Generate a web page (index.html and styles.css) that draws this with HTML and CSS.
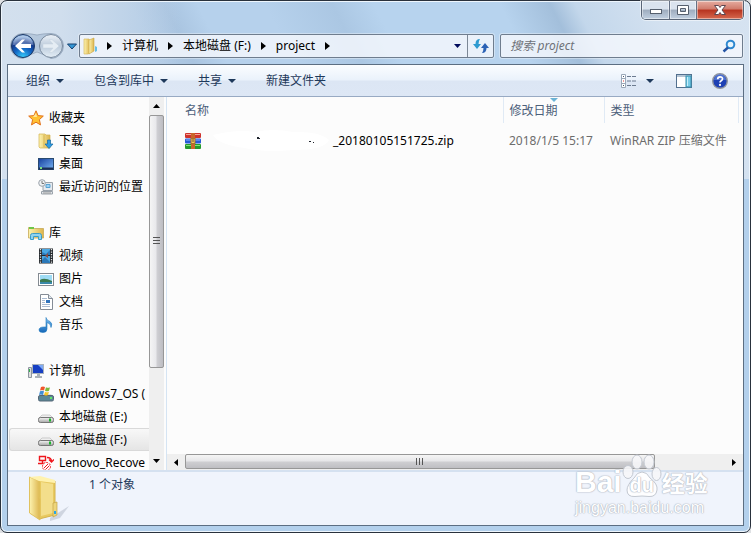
FILE: index.html
```html
<!DOCTYPE html>
<html lang="zh-CN">
<head>
<meta charset="utf-8">
<title>project</title>
<link rel="stylesheet" href="styles.css">
</head>
<body>
<svg class="defs" width="0" height="0" aria-hidden="true">
  <defs>
    <linearGradient id="gold" x1="0" x2="1"><stop offset="0" stop-color="#fdf3b0"/><stop offset="1" stop-color="#dcb44c"/></linearGradient>
    <linearGradient id="blue" x1="0" y1="0" x2="0" y2="1"><stop offset="0" stop-color="#7cc0f5"/><stop offset="1" stop-color="#1567b8"/></linearGradient>
    <linearGradient id="screen" x1="0" y1="0" x2="1" y2="1"><stop offset="0" stop-color="#163f9c"/><stop offset="1" stop-color="#78b5f5"/></linearGradient>
    <linearGradient id="metal" x1="0" y1="0" x2="0" y2="1"><stop offset="0" stop-color="#f6f6f6"/><stop offset="1" stop-color="#a5a5a5"/></linearGradient>
    <radialGradient id="orb" cx=".5" cy="1" r=".9"><stop offset="0" stop-color="#39d3ff"/><stop offset=".45" stop-color="#1266c4"/><stop offset=".75" stop-color="#15398c"/><stop offset="1" stop-color="#8fb3e0"/></radialGradient>
    <linearGradient id="orb2" x1="0" y1="0" x2="0" y2="1"><stop offset="0" stop-color="#edf2f8"/><stop offset=".5" stop-color="#bccbdb"/><stop offset="1" stop-color="#e4eef7"/></linearGradient>
    <symbol id="i-drive" viewBox="0 0 16 16"><path d="M1 9 4 6h8l3 3z" fill="#eee" stroke="#bbb" stroke-width=".7"/><rect x=".5" y="8.5" width="15" height="5" rx="1.8" fill="url(#metal)" stroke="#777"/><path d="M12 9.5v3" stroke="#19b62a" stroke-width="2"/></symbol>
  </defs>
</svg>
<div class="window">
  <header class="titlebar">
    <div class="controls">
      <button class="ctl min" aria-label="最小化"><svg width="14" height="12"><rect x="1.500" y="5.500" width="11" height="4" fill="#fff" stroke="#56606e"/></svg></button>
      <button class="ctl max" aria-label="最大化"><svg width="14" height="12"><path d="M1.500 1.500h11v9h-11zM4.500 4.500v3h5v-3z" fill="#fff" fill-rule="evenodd" stroke="#56606e"/></svg></button>
      <button class="ctl close" aria-label="关闭"><svg width="14" height="12"><path d="M1.500 1.500h4L7 3.500l1.500-2h4L9 6l3.500 4.500h-4L7 8.500l-1.500 2h-4L5 6z" fill="#fff" stroke="#5c4650"/></svg></button>
    </div>
  </header>
  <nav class="navbar" aria-label="导航">
    <div class="travel">
      <svg class="travel-back" width="56" height="28" aria-hidden="true"><path d="M14 1.500Q22 1.500 28 3Q34 1.500 42 1.500A12.500 12.500 0 1 1 42 26.500Q34 22 28 20Q22 22 14 26.500A12.500 12.500 0 1 1 14 1.500z" fill="#9fb5cd" fill-opacity=".55" stroke="#8193aa" stroke-opacity=".6"/></svg>
      <button aria-label="后退"><svg width="26" height="26"><circle cx="13" cy="13" r="11.500" fill="url(#orb)" stroke="#1c3865"/><path d="M3 12a10 9.500 0 0 1 20 0z" fill="#fff" opacity=".28"/><path d="M5 13l7-6.500h3l-4 4.500h10v4H11l4 4.500h-3z" fill="#fff"/></svg></button>
      <button aria-label="前进"><svg width="26" height="26"><circle cx="13" cy="13" r="11.500" fill="url(#orb2)" stroke="#78899d"/><path d="M21 13l-7-6.500h-3l4 4.500H5v4h10l-4 4.500h3z" fill="#e5edf4" stroke="#c5d3df" stroke-width=".5"/></svg></button>
    </div>
    <button class="history" aria-label="最近的页面"><svg width="10" height="7"><path d="M.500 1h9L5 6z" fill="#3598d6" stroke="#17406f"/></svg></button>
    <div class="address">
      <svg class="addr-icon" width="16" height="18"><path d="M1 2h5l1 2v12l-2 1H1z" fill="url(#gold)" stroke="#d5b453" stroke-width=".6"/><path d="M6 3l5-2v13l-5 3z" fill="url(#gold)" stroke="#c7a644" stroke-width=".6"/><path d="M12 9l2 1v4l-2 1z" fill="#65bde8"/></svg>
      <svg class="sep" width="5" height="8"><path d="M0 0l5 4-5 4z"/></svg>
      <button>计算机</button>
      <svg class="sep" width="5" height="8"><path d="M0 0l5 4-5 4z"/></svg>
      <button>本地磁盘 (F:)</button>
      <svg class="sep" width="5" height="8"><path d="M0 0l5 4-5 4z"/></svg>
      <button>project</button>
      <svg class="sep" width="5" height="8"><path d="M0 0l5 4-5 4z"/></svg>
      <button class="addr-drop" aria-label="以前的位置"><svg width="7" height="4"><path d="M0 0h7L3.500 4z" fill="#000b5c"/></svg></button>
      <button class="refresh" aria-label="刷新"><svg width="16" height="14"><path d="M7 0Q2.500 0 2.500 5H0l4 5 4-5H5.500Q5.500 2 7 0z" fill="#2d9ad0"/><path d="M9 14q4.500 0 4.500-5H16l-4-5-4 5h2.500q0 3-1.500 5z" fill="#2b62b5"/></svg></button>
    </div>
    <label class="search">
      <input type="text" placeholder="搜索 project" aria-label="搜索 project">
      <svg width="14" height="14"><circle cx="8.500" cy="5.500" r="3.800" fill="#e8f5fd" stroke="#2e88d0" stroke-width="2"/><path d="M6 8.500L1.500 12.500" stroke="#2454a4" stroke-width="2.500"/></svg>
    </label>
  </nav>

  <div class="client">
    <div class="toolbar">
      <button>组织<svg width="8" height="4"><path d="M0 0h8L4 4z"/></svg></button>
      <button>包含到库中<svg width="8" height="4"><path d="M0 0h8L4 4z"/></svg></button>
      <button>共享<svg width="8" height="4"><path d="M0 0h8L4 4z"/></svg></button>
      <button>新建文件夹</button>
      <span class="tools">
        <button aria-label="更改视图"><svg width="16" height="14"><path d="M.500 .500h4v13h-4zM.500 4.500h4M.500 9.500h4" fill="#fff" stroke="#9aa8b8"/><path d="M2 2.500h1M2 11.500h1" stroke="#475a70"/><path d="M2 7h1" stroke="#d33"/><path d="M6 2.500h4m1 0h4M6 7h4m1 0h4M6 11.500h4m1 0h4" stroke="#6c7b90"/></svg></button>
        <button aria-label="更多选项"><svg width="8" height="4"><path d="M0 0h8L4 4z"/></svg></button>
        <button aria-label="显示预览窗格"><svg width="16" height="14"><rect x=".500" y=".500" width="15" height="13" fill="#fff" stroke="#52708f"/><path d="M1 2h14" stroke="#6d8cab"/><rect x="10" y="2" width="5" height="11" fill="#79cce7" stroke="#398fae"/><path d="M11.500 3v9" stroke="#c6effb"/></svg></button>
        <button aria-label="获取帮助"><svg width="16" height="16"><circle cx="8" cy="8" r="7.300" fill="#1d40b4" stroke="#8f949d" stroke-width="1.400"/><path d="M2 7a6 6 0 0 1 12 0z" fill="#7aa0ec" opacity=".5"/><path d="M5.700 6.200q0-2.400 2.400-2.400t2.400 2q0 1.200-1.300 1.900T8 9.500" fill="none" stroke="#fff" stroke-width="1.700"/><circle cx="8" cy="11.900" r="1.100" fill="#fff"/></svg></button>
      </span>
    </div>

    <div class="body">
      <aside class="tree">
        <ul>
          <li class="root"><a href="#"><svg viewBox="0 0 16 16"><path d="M8 .800l2.100 4.800 5.200.500-3.900 3.500 1.100 5.300L8 12.200l-4.500 2.700 1.100-5.300L.700 6.100l5.200-.5z" fill="#ffc132" stroke="#e2711c"/><path d="M8 3l1 4H5z" fill="#ffe79a"/></svg>收藏夹</a></li>
          <li><a href="#"><svg viewBox="0 0 16 16"><path d="M1 1h6l1 1h4v13H2l-1-1z" fill="url(#gold)" stroke="#d2b14f" stroke-width=".7"/><path d="M6 2v12" stroke="#d6b64f"/><path d="M9.500 7h3v4h2.500l-4 4.500L7 11h2.500z" fill="#2f9be4" stroke="#16679f" stroke-width=".7"/></svg>下载</a></li>
          <li><a href="#"><svg viewBox="0 0 16 16"><rect x=".500" y="2.500" width="15" height="11" fill="url(#screen)" stroke="#294a70"/><path d="M1 12.500h14" stroke="#1b2e55" stroke-width="2"/><path d="M2 12h2" stroke="#7be081" stroke-width="2"/></svg>桌面</a></li>
          <li><a href="#"><svg viewBox="0 0 16 16"><path d="M5 3.500h9.500v8H5zM3.500 12.500h11v2.500h-11z" fill="#e5e9ee" stroke="#9aa2aa"/><path d="M8 5.500h4v3H8z" fill="#9fd2f5" stroke="#58a3d2"/><path d="M5 14h8" stroke="#999"/><circle cx="4" cy="4" r="3.300" fill="#eef2f5" stroke="#9ba3aa"/><path d="M4 2v2.500h2" fill="none" stroke="#777"/></svg>最近访问的位置</a></li>
        </ul>
        <ul>
          <li class="root"><a href="#"><svg viewBox="0 0 16 16"><path d="M.500 13V2.500h5l1 1h9V13z" fill="url(#gold)" stroke="#c7a957" stroke-width=".8"/><path d="M1 3h5" stroke="#6fc648" stroke-width="2"/><path d="M2.500 14.500v-4q0-2 2-2h7q2 0 2 2v4h-3v-3h-5v3z" fill="#8ed3f0" stroke="#3b9cc8"/></svg>库</a></li>
          <li><a href="#"><svg viewBox="0 0 16 16"><rect x="1" y=".500" width="14" height="15" fill="#252a2e"/><path d="M4 1h8v6H4zM4 8h8v7H4z" fill="#4aa8e4"/><path d="M4 4l4 2 4-4v5H4zM4 12l3-3 5 5v1H4z" fill="#2b78b8"/><path d="M7 8l3-3v5z" fill="#8b4b42"/><path d="M2.500 1v14M13.500 1v14" stroke="#e5e5e5" stroke-width="1.300" stroke-dasharray="1.300 1.200"/></svg>视频</a></li>
          <li><a href="#"><svg viewBox="0 0 16 16"><rect x=".500" y="2.500" width="15" height="12" fill="#fff" stroke="#848a91"/><rect x="2" y="4" width="12" height="9" fill="#9fdcf5"/><path d="M2 9q4-3 12 1v3H2z" fill="#3c7951"/><path d="M2 11h12v2H2z" fill="#3988a8"/></svg>图片</a></li>
          <li><a href="#"><svg viewBox="0 0 16 16"><path d="M2.500 .500h8l4 4v11h-12z" fill="#fff" stroke="#858c96"/><path d="M10.500 .500v4h4" fill="#dfe7ef" stroke="#858c96"/><path d="M4 4.500h5M4 6.500h3M4 8.500h3M4 10.500h8M4 12.500h8" stroke="#a9bbd2"/><rect x="8" y="6" width="4" height="3" fill="#2f73bd"/></svg>文档</a></li>
          <li><a href="#"><svg viewBox="0 0 16 16"><path d="M8 .500q.500 3 4 4 3 2 1 6 0-4-4-5v6.500q0 3.500-4 3.500-4 0-4-2.500 0-3 5-3h2z" fill="url(#blue)" stroke="#1f78bd" stroke-width=".6"/></svg>音乐</a></li>
        </ul>
        <ul>
          <li class="root"><a href="#"><svg viewBox="0 0 16 16"><path d="M.500 4.500h3v10h-3z" fill="#ddd" stroke="#8d969f"/><path d="M1.500 6v3" stroke="#32b14a"/><rect x="4.500" y="1.500" width="11" height="9" fill="#173fc3" stroke="#a9b2bc"/><path d="M10 2h5v5z" fill="#7faaf5"/><path d="M9 11h3v2h2v2H7v-2h2z" fill="#aab1b8"/></svg>计算机</a></li>
          <li><a href="#"><svg viewBox="0 0 16 16"><path d="M1 10l2-2h10l2 2z" fill="#dce2e5"/><rect x=".500" y="9.500" width="15" height="5.500" rx="1.500" fill="#5b8796" stroke="#567"/><path d="M12 12h2" stroke="#61e768" stroke-width="2"/><path d="M3 1q2-1 4 0L6 4.500q-2-1-4 0z" fill="#f1562b"/><path d="M8 1.300q2 1 4 0l-1 3.500q-2 1-4 0z" fill="#7bb93c"/><path d="M2 5.300q2-1 4 0L5 9q-2-1-4 0z" fill="#418ed5"/><path d="M7 5.700q2 1 4 0L10 9q-2 1-4 0z" fill="#f9c62a"/></svg>Windows7_OS (</a></li>
          <li><a href="#"><svg><use href="#i-drive"/></svg>本地磁盘 (E:)</a></li>
          <li class="selected"><a href="#" aria-current="page"><svg><use href="#i-drive"/></svg>本地磁盘 (F:)</a></li>
          <li><a href="#"><svg viewBox="0 0 16 16"><path d="M1.500 1.500h6v4h-6zM0 8.500h9M9 2.500q4.500 0 4.500 4M11 4.500l2.500 2.500L16 4.500M4.500 6v2" fill="none" stroke="#ef161c" stroke-width="1.400"/><circle cx="8.500" cy="11.500" r="4" fill="#fff" stroke="#ef161c" stroke-dasharray="2 1"/><path d="M6 13l4-4M7.500 14.500l4-4" stroke="#ef161c"/></svg>Lenovo_Recove</a></li>
        </ul>
      </aside>
      <div class="vscroll" aria-hidden="true">
        <span class="arrow"><svg width="7" height="4"><path d="M0 4h7L3.500 0z"/></svg></span>
        <div class="track"><div class="thumb"><svg width="7" height="8"><path d="M0 .500h7M0 3.500h7M0 6.500h7" stroke="#555"/></svg></div></div>
        <span class="arrow"><svg width="7" height="4"><path d="M0 0h7L3.500 4z"/></svg></span>
      </div>
      <main class="files">
        <table>
          <colgroup><col><col class="c-date"><col class="c-type"><col class="c-rest"></colgroup>
          <thead><tr><th>名称</th><th class="sorted">修改日期</th><th>类型</th><th></th></tr></thead>
          <tbody><tr>
            <td class="name"><div class="file">
              <svg width="16" height="16"><rect x="0" y="0" width="16" height="5" rx="1" fill="#cf332d"/><rect x="0" y="5.500" width="16" height="5" rx="1" fill="#275bd6"/><rect x="0" y="11" width="16" height="5" rx="1" fill="#259a2d"/><path d="M1 1.500h14" stroke="#f5a596"/><path d="M1 7h14" stroke="#8bb3ff"/><path d="M1 12.500h14" stroke="#7ee476"/><rect x="6" width="4" height="16" fill="#c9652a"/><rect x="6" y="5.500" width="4" height="5" fill="#f3c75a" stroke="#a4712a"/><path d="M8 6v3" stroke="#74512a"/></svg>
              <svg class="smudge" width="132" height="24"><path d="M12 6Q36 0 54 3Q72-1 92 3Q119 2 128 11Q124 21 92 21Q65 24 44 19Q18 16 12 6z" fill="#fff"/><path d="M56 8h2v1h1v1h-3zM108 12h2v1h-2zM112 13h1v1h-1z" fill="#20252e"/></svg>
              <span>_20180105151725.zip</span>
            </div></td>
            <td>2018/1/5 15:17</td><td colspan="2">WinRAR ZIP 压缩文件</td>
          </tr></tbody>
        </table>
        <div class="hscroll" aria-hidden="true">
          <span class="arrow"><svg width="4" height="7"><path d="M4 0v7L0 3.500z"/></svg></span>
          <div class="track"><div class="thumb"><svg width="8" height="7"><path d="M.500 0v7M3.500 0v7M6.500 0v7" stroke="#555"/></svg></div></div>
          <span class="arrow"><svg width="4" height="7"><path d="M0 0v7l4-3.500z"/></svg></span>
        </div>
      </main>
    </div>

    <footer class="details">
      <svg width="42" height="48"><path d="M22 43L41 31l-9 12-10 3z" fill="#8690a0" opacity=".3"/><path d="M11 4l16 2v34l-16 4z" fill="#e8c95f" stroke="#d4b24d"/><path d="M13 7l12 2v29l-12 3z" fill="#f3de8b"/><path d="M1.500 2L11 6v16l1 2v21L1.500 38z" fill="url(#gold)" stroke="#e1c25f"/><path d="M1.500 2L12 1l15 4v3L11 6z" fill="#fff2ae"/><path d="M25 28l4-1v13l-4 2z" fill="#edd57b" stroke="#c4a445" stroke-width=".7"/><path d="M27 36v3" stroke="#27a5e7" stroke-width="2"/></svg>
      <span>1 个对象</span>
    </footer>
  </div>

  <div class="watermark">
    <div class="wm-brand">
      <span class="wm-bai">Bai</span>
      <span class="wm-paw"><svg width="40" height="44" aria-hidden="true"><g fill="#f6f6f8" fill-opacity=".9" stroke="#c3c8d1"><ellipse cx="6" cy="18" rx="5" ry="6.500"/><ellipse cx="15" cy="8" rx="5" ry="7"/><ellipse cx="27" cy="8" rx="5" ry="7"/><ellipse cx="34.500" cy="20" rx="4.500" ry="6.500"/><path d="M20 18q5 0 8 6 8 6 7 12-1 7-8 6.500-7-1-14 0-8 .5-8-6.500 0-5 7-12 3-6 8-6z" fill="#fff"/></g></svg><b>du</b></span>
      <span class="wm-cn">经验</span>
    </div>
    <div class="wm-url">jingyan.baidu.com</div>
  </div>
</div>
</body>
</html>
```
FILE: styles.css
```css
* { box-sizing: border-box; }

body {
  margin: 0;
  background: #dfe1e4;
  font: 12px/18px "Noto Sans", "Noto Sans CJK SC", sans-serif;
  color: #000;
}

button {
  display: flex;
  align-items: center;
  padding: 0;
  border: 0;
  background: none;
  font: inherit;
  color: inherit;
}

svg { display: block; flex: none; }
.defs { position: absolute; }

.window {
  position: relative;
  display: flex;
  flex-direction: column;
  height: 100vh;
  padding: 0 6px 6px;
  border: 1px solid #29313c;
  border-radius: 7px;
  box-shadow: inset 0 0 0 1px #eef6fd;
  background:
    linear-gradient(90deg, #d3e0ee 0, #d0deed 8%, rgba(208, 222, 237, 0) 24%) 0 0 / 100% 178px no-repeat,
    linear-gradient(63deg, #b0cae5 0 26%, #a9c4e0 30%, #b6d1ec 34% 42%, #abc7e3 50%, #b7d3ee 55% 70%, #a3bfdb 76%, #c3d7eb 79%, #d3e1f0 88%, #d6e3f1) 0 0 / 100% 178px no-repeat,
    #b3d0ec;
}

.titlebar {
  display: flex;
  flex: none;
  justify-content: flex-end;
  height: 33px;
}

.controls {
  display: flex;
  height: 19px;
  border: 1px solid #596577;
  border-top: 0;
  border-radius: 0 0 5px 5px;
  overflow: hidden;
  box-shadow: 0 0 0 1px rgba(255, 255, 255, .5);
}

.ctl {
  justify-content: center;
  width: 27px;
  background: linear-gradient(#dae3ee 0 45%, #9eacbe 50%, #c1d0e1);
  box-shadow: inset 0 0 0 1px rgba(255, 255, 255, .45);
}
.ctl + .ctl { border-left: 1px solid #657185; }
.controls .close {
  width: 47px;
  background: linear-gradient(#e6aca0 0, #d07a6b 45%, #b7331f 50%, #d6694f);
}

.navbar {
  display: flex;
  flex: none;
  align-items: center;
  height: 24px;
  margin-bottom: 6px;
  padding: 0 1px 0 3px;
}

.travel { position: relative; display: flex; gap: 2px; width: 54px; }
.travel button { position: relative; }
.travel-back { position: absolute; left: -1px; top: -1px; }
.history { justify-content: center; width: 15px; }

.address, .search {
  display: flex;
  align-items: center;
  height: 24px;
  border: 1px solid #6f7d8e;
  border-radius: 2px;
  background: rgba(245, 248, 253, .82);
  box-shadow: 0 0 0 1px rgba(255, 255, 255, .35);
}
.address { flex: 20 1 0; gap: 10px; padding-left: 3px; }
.address button { white-space: nowrap; }
.addr-icon { margin-right: -2px; }
.address .addr-drop { margin-left: auto; margin-right: -4px; }
.address .refresh {
  justify-content: center;
  width: 26px;
  height: 22px;
  border-left: 1px solid #7c8896;
}
.search { flex: 11 1 0; min-width: 0; margin-left: 6px; padding: 0 6px 0 9px; }
.search input {
  flex: 1;
  min-width: 0;
  padding: 0;
  border: 0;
  outline: 0;
  background: none;
  font: inherit;
  font-style: italic;
}
.search input::placeholder { color: #6e7278; opacity: 1; }

.client {
  display: flex;
  flex: 1;
  flex-direction: column;
  min-height: 0;
  border: 1px solid #5c6e82;
  background: #fcfcfc;
}

.toolbar {
  display: flex;
  flex: none;
  align-items: center;
  gap: 30px;
  height: 32px;
  padding: 0 15px 0 18px;
  border-bottom: 1px solid #98aac3;
  background: linear-gradient(#fbfdff, #eaf2fb 48%, #dce6f4 52%, #dde7f5);
  color: #1e395b;
}
.toolbar button { gap: 6px; }
.toolbar svg path:only-child { fill: #1e395b; }
.tools { display: flex; align-items: center; margin-left: auto; gap: 20px; }
.tools button:nth-child(2) { margin: 0 2px 0 -11px; }

.body { display: flex; flex: 1; min-height: 0; }

.tree {
  flex: none;
  width: 141px;
  padding-top: 9px;
  overflow: hidden;
}
.tree ul { margin: 0 0 23px; padding: 0; list-style: none; }
.tree li { height: 23px; padding-left: 30px; white-space: nowrap; }
.tree .root { padding-left: 20px; }
.tree a {
  display: flex;
  align-items: center;
  gap: 5px;
  height: 23px;
  color: inherit;
  text-decoration: none;
}
.tree svg { width: 16px; height: 16px; }
.tree .selected {
  margin-left: 1px;
  padding-left: 28px;
  border: 1px solid #d9d9d9;
  border-right: 0;
  border-radius: 3px 0 0 3px;
  background: linear-gradient(#f8f8f8, #e5e5e5);
}
.tree .selected a { height: 21px; }

.vscroll, .hscroll { display: flex; background: #efefef; }
.vscroll { flex-direction: column; flex: none; width: 15px; }
.hscroll { flex: none; height: 16px; }
.arrow { display: flex; flex: none; align-items: center; justify-content: center; }
.vscroll .arrow { height: 18px; }
.hscroll .arrow { width: 18px; }
.track { flex: 1; }
.thumb {
  display: flex;
  align-items: center;
  justify-content: center;
  border: 1px solid #979797;
  border-radius: 2px;
}
.vscroll .thumb { height: 75%; background: linear-gradient(90deg, #f5f5f5, #e8e8eb 48%, #d0d0d4 52%, #bdbdc2); }
.hscroll .thumb { width: 87%; height: 15px; background: linear-gradient(#f5f5f5, #e6e6e8 48%, #cfcfd2 52%, #bfbfc3); }

.files {
  display: flex;
  flex: 1;
  flex-direction: column;
  justify-content: space-between;
  min-width: 0;
  margin-left: 2px;
  border-left: 1px solid #d5e4f3;
}

table { width: 100%; border-collapse: collapse; table-layout: fixed; }
.c-date { width: 101px; }
.c-type { width: 134px; }
.c-rest { width: 5px; }
th {
  position: relative;
  height: 26px;
  padding: 2px 0 0 6px;
  border-right: 1px solid #e0eaf5;
  color: #4c607a;
  font-weight: 400;
  text-align: left;
}
th:first-child, td:first-child { padding-left: 18px; }
th:last-child { padding: 0; border: 0; }
.sorted::after {
  content: "";
  position: absolute;
  top: 1px;
  left: 50%;
  margin-left: -4px;
  border: 4px solid transparent;
  border-top-color: #6bb3d5;
  border-bottom: 0;
}
td { height: 36px; padding: 0 0 0 6px; color: #6d6d6d; white-space: nowrap; }
.name { color: #000; }
.file { display: flex; align-items: center; }

.details {
  display: flex;
  flex: none;
  gap: 19px;
  height: 55px;
  padding: 3px 20px;
  border-top: 2px solid #d5e1f0;
  background: #f0f4fc;
  color: #1e395b;
}
.details span { padding-top: 1px; }

.watermark {
  position: absolute;
  right: 41px;
  bottom: 14px;
  width: 134px;
  color: #fff;
  font-family: "Liberation Sans", "Noto Sans CJK SC", sans-serif;
  text-shadow: 0 0 1px #a9b0bc, 0 0 1px #b4bac5, 0 0 2px #c3c8d1;
}
.wm-brand { display: flex; align-items: flex-end; height: 44px; font-weight: 700; }
.wm-bai { font-size: 30px; line-height: 32px; }
.wm-paw { position: relative; }
.wm-paw b {
  position: absolute;
  left: 0;
  right: 0;
  bottom: 1px;
  font-size: 20px;
  line-height: 24px;
  text-align: center;
}
.wm-cn { font-size: 23px; line-height: 28px; }
.wm-url { font-size: 16px; line-height: 20px; }
```
